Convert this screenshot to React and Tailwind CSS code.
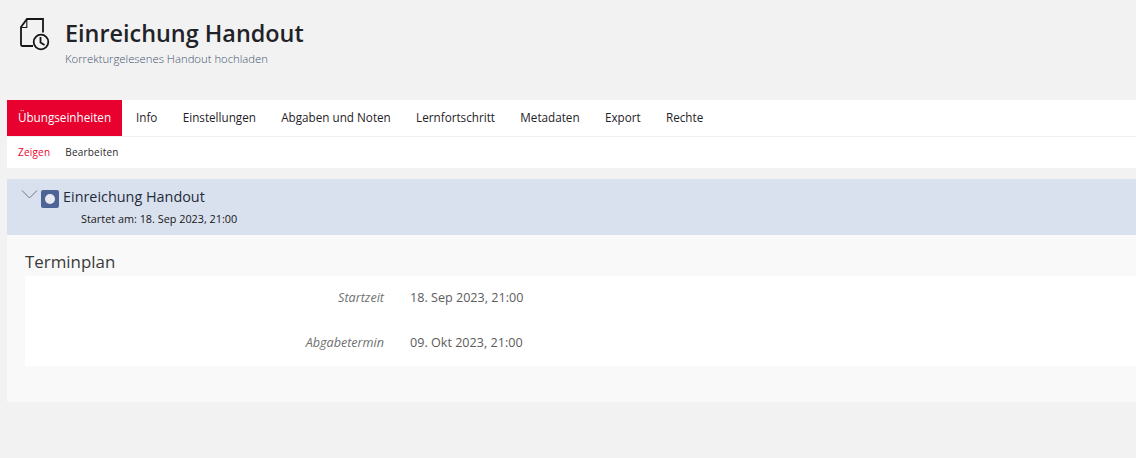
import React from 'react';

const tabs = ["Info", "Einstellungen", "Abgaben und Noten", "Lernfortschritt", "Metadaten", "Export", "Rechte"];

const schedule = [
  { label: "Startzeit", value: "18. Sep 2023, 21:00" },
  { label: "Abgabetermin", value: "09. Okt 2023, 21:00" },
];

const App = () => {
  return (
    <div className="h-[458px] overflow-hidden bg-[#f2f2f2] pl-[7px] font-['Open_Sans',sans-serif] text-[#161616]">
      {/* Header */}
      <div className="flex h-[100px] items-start pl-[12px] pt-[17px]">
        <svg className="h-[34px] w-[32px]" viewBox="0 0 32 34" fill="none" stroke="#161616" strokeWidth="1.800">
          <path d="M14 29H3.500a1.500 1.500 0 0 1-1.500-1.500V10L8 2h16v13.500" />
          <path d="M7.800 2v8.500H2" strokeWidth="1.100" />
          <circle cx="22" cy="25" r="7.300" />
          <path d="M21.500 20v5.500l4 2.500" />
        </svg>
        <div className="ml-[14px]">
          <h1 className="text-[23.400px] leading-[32px] font-semibold text-[#1f2328]">Einreichung Handout</h1>
          <p className="mt-[2px] text-[11.300px] leading-[16px] font-light text-[#3f5470]">Korrekturgelesenes Handout hochladen</p>
        </div>
      </div>

      {/* Tabs */}
      <div className="flex h-[37px] border-b border-[#f0f0f0] bg-white text-[11.700px]">
        <div className="flex h-[36px] w-[115px] items-center justify-center bg-[#e8002e] text-white">Übungseinheiten</div>
        <div className="flex h-[36px] items-center gap-[25.300px] pl-[14px] text-[#1f2328]">
          {tabs.map((tab) => (
            <span key={tab}>{tab}</span>
          ))}
        </div>
      </div>

      {/* Sub tabs */}
      <div className="flex h-[31px] items-center gap-[15px] bg-white pl-[11px] text-[10px] tracking-[0.2px]">
        <span className="text-[#e8002e]">Zeigen</span>
        <span className="text-[#2b2b2b]">Bearbeiten</span>
      </div>

      {/* Item */}
      <div className="mt-[11px] h-[56px] bg-[#dae1ee]">
        <div className="flex pl-[14px] pt-[8px]">
          <svg className="mt-[2px] h-[12px] w-[17px]" viewBox="0 0 17 12" fill="none" stroke="#6f7580" strokeWidth="1">
            <path d="M1 1.500l7.500 7.500L16 1.500" />
          </svg>
          <div className="ml-[3px] mt-[3px] flex h-[18px] w-[18px] items-center justify-center rounded-[2px] bg-[#4c6596]">
            <div className="h-[10px] w-[10px] rounded-full bg-[#e6e9f0]" />
          </div>
          <span className="ml-[4px] text-[14.400px] leading-[20px] text-[#1f2b3c]">Einreichung Handout</span>
        </div>
        <p className="pl-[74px] pt-[3px] text-[10.850px] leading-[16px] text-[#161616]">Startet am: 18. Sep 2023, 21:00</p>
      </div>

      {/* Schedule */}
      <div className="h-[167px] bg-[#f9f9f9] pl-[18px] pt-[16px]">
        <h2 className="text-[16.900px] leading-[22px] text-[#3a3a3a]">Terminplan</h2>
        <div className="mt-[3px] h-[90px] bg-white">
          {schedule.map((row) => (
            <div key={row.label} className="flex h-[45px] items-center text-[12.600px]">
              <span className="w-[359px] text-right text-[#6f6f6f] italic">{row.label}</span>
              <span className="ml-[26px] text-[#5c5c5c]">{row.value}</span>
            </div>
          ))}
        </div>
      </div>
    </div>
  );
};

export default App;
